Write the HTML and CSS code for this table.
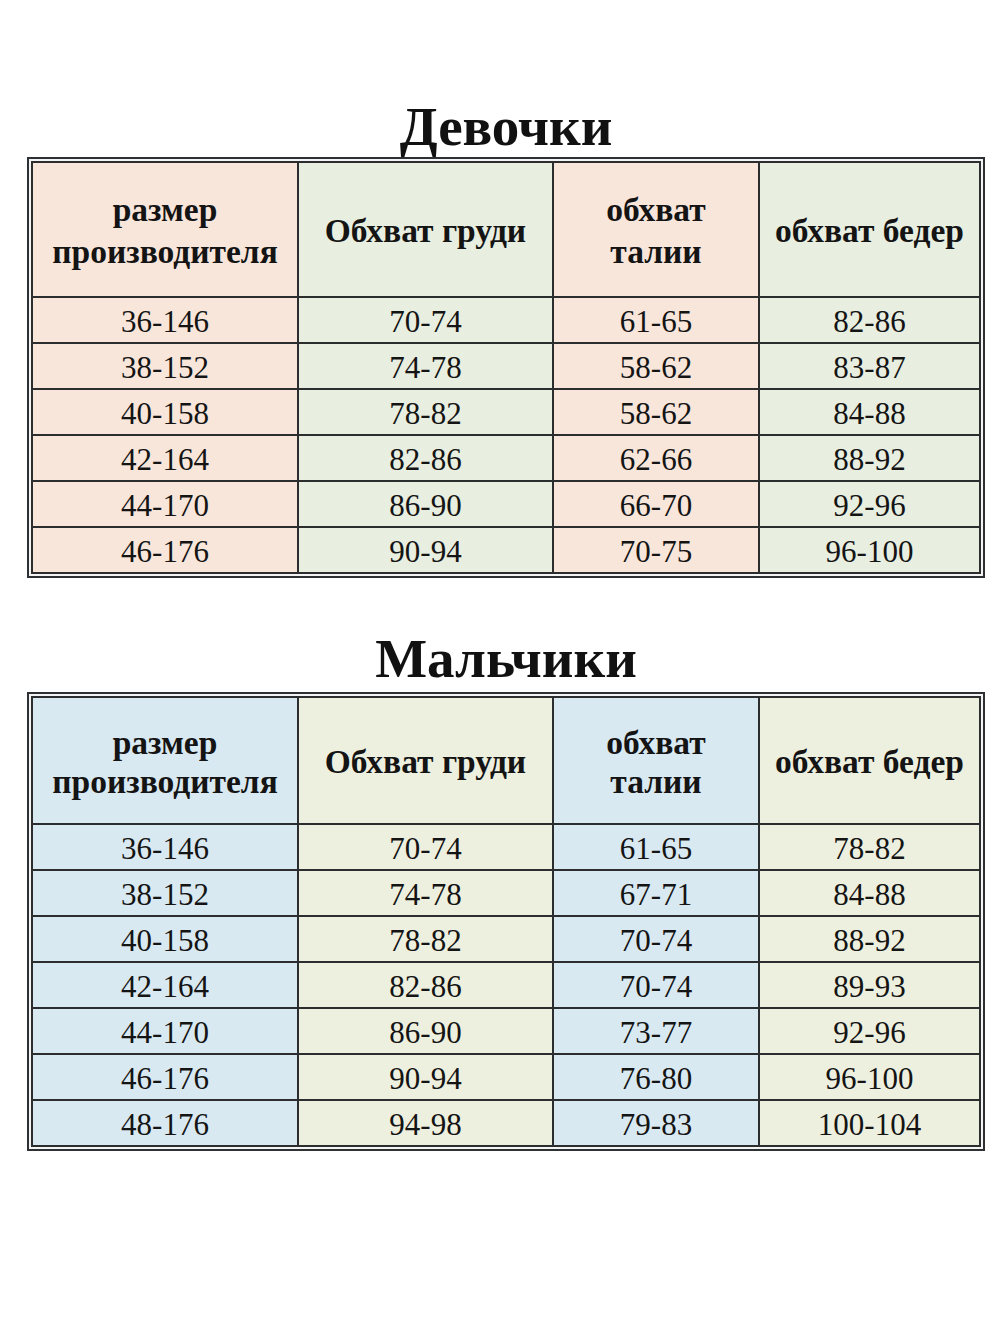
FILE: index.html
```html
<!DOCTYPE html>
<html lang="ru">
<head>
<meta charset="utf-8">
<title>Размерная таблица</title>
<link rel="stylesheet" href="styles.css">
</head>
<body>
<main class="page">
  <section class="block block--girls">
    <h1 class="title">Девочки</h1>
    <div class="frame">
      <div class="grid">
        <div class="cell head c1"><span>размер<br>производителя</span></div>
        <div class="cell head c2"><span>Обхват груди</span></div>
        <div class="cell head c1"><span>обхват<br>талии</span></div>
        <div class="cell head c2"><span>обхват бедер</span></div>

        <div class="cell c1">36-146</div><div class="cell c2">70-74</div><div class="cell c1">61-65</div><div class="cell c2">82-86</div>
        <div class="cell c1">38-152</div><div class="cell c2">74-78</div><div class="cell c1">58-62</div><div class="cell c2">83-87</div>
        <div class="cell c1">40-158</div><div class="cell c2">78-82</div><div class="cell c1">58-62</div><div class="cell c2">84-88</div>
        <div class="cell c1">42-164</div><div class="cell c2">82-86</div><div class="cell c1">62-66</div><div class="cell c2">88-92</div>
        <div class="cell c1">44-170</div><div class="cell c2">86-90</div><div class="cell c1">66-70</div><div class="cell c2">92-96</div>
        <div class="cell c1">46-176</div><div class="cell c2">90-94</div><div class="cell c1">70-75</div><div class="cell c2">96-100</div>
      </div>
    </div>
  </section>

  <section class="block block--boys">
    <h1 class="title">Мальчики</h1>
    <div class="frame">
      <div class="grid">
        <div class="cell head c1"><span>размер<br>производителя</span></div>
        <div class="cell head c2"><span>Обхват груди</span></div>
        <div class="cell head c1"><span>обхват<br>талии</span></div>
        <div class="cell head c2"><span>обхват бедер</span></div>

        <div class="cell c1">36-146</div><div class="cell c2">70-74</div><div class="cell c1">61-65</div><div class="cell c2">78-82</div>
        <div class="cell c1">38-152</div><div class="cell c2">74-78</div><div class="cell c1">67-71</div><div class="cell c2">84-88</div>
        <div class="cell c1">40-158</div><div class="cell c2">78-82</div><div class="cell c1">70-74</div><div class="cell c2">88-92</div>
        <div class="cell c1">42-164</div><div class="cell c2">82-86</div><div class="cell c1">70-74</div><div class="cell c2">89-93</div>
        <div class="cell c1">44-170</div><div class="cell c2">86-90</div><div class="cell c1">73-77</div><div class="cell c2">92-96</div>
        <div class="cell c1">46-176</div><div class="cell c2">90-94</div><div class="cell c1">76-80</div><div class="cell c2">96-100</div>
        <div class="cell c1">48-176</div><div class="cell c2">94-98</div><div class="cell c1">79-83</div><div class="cell c2">100-104</div>
      </div>
    </div>
  </section>
</main>
</body>
</html>
```

FILE: styles.css
```css
html, body {
  margin: 0;
  padding: 0;
  background: #ffffff;
}

.page {
  width: 958px;
  margin-left: 27px;
  padding-top: 97px;
  font-family: "Liberation Serif", "Times New Roman", serif;
  color: #141414;
}

.block--boys {
  margin-top: 51px;
}

.title {
  margin: 0;
  text-align: center;
  font-size: 55px;
  line-height: 60px;
  font-weight: bold;
  color: #111;
  height: 60px;
}

.block--boys .title {
  height: 63px;
}

.frame {
  border: 2px solid #2e3133;
  padding: 2px;
  background: #f4f4f4;
}

.grid {
  display: grid;
  grid-template-columns: 266px 255px 206px 221px;
  border-top: 2px solid #2b2d2e;
  border-left: 2px solid #2b2d2e;
}

.cell {
  box-sizing: border-box;
  height: 46px;
  border-right: 2px solid #2b2d2e;
  border-bottom: 2px solid #2b2d2e;
  display: flex;
  align-items: center;
  justify-content: center;
  text-align: center;
  font-size: 31px;
  line-height: 1;
  padding-top: 2px;
}

.cell.head {
  height: 135px;
  font-size: 33.5px;
  font-weight: bold;
  line-height: 42px;
  padding-top: 2px;
}

.block--boys .cell.head {
  height: 127px;
  line-height: 39px;
}

.block--girls .c1 { background: #f8e6db; }
.block--girls .c2 { background: #e8eee0; }
.block--boys .c1 { background: #d9e9f1; }
.block--boys .c2 { background: #eef0df; }
```
